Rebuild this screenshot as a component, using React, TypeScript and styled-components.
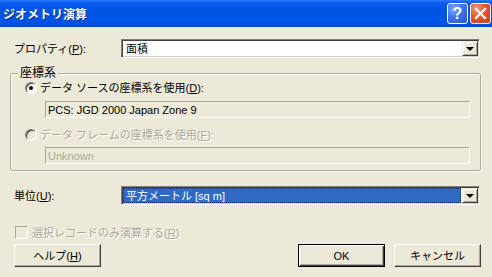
import React from 'react';
import styled, { createGlobalStyle } from 'styled-components';

const GlobalStyle = createGlobalStyle`
  html, body {
    margin: 0;
    padding: 0;
    background: #ece9d8;
  }
  body {
    font-family: "Liberation Sans", "Noto Sans CJK JP", sans-serif;
    font-size: 11px;
    color: #000;
  }
  * {
    box-sizing: border-box;
  }
`;

const Window = styled.div`
  width: 492px;
  height: 277px;
  background: #ece9d8;
  overflow: hidden;
  display: flex;
  flex-direction: column;
`;

const TitleBar = styled.div`
  flex: none;
  height: 27px;
  display: flex;
  align-items: center;
  gap: 2px;
  padding: 0 1px 0 3px;
  background: linear-gradient(
    to bottom,
    #2f7bff 0%,
    #0a5cf0 10%,
    #0054e3 35%,
    #0055e8 80%,
    #0046d6 100%
  );
`;

const Title = styled.div`
  flex: 1;
  color: #fff;
  font-family: "Noto Sans CJK JP", sans-serif;
  font-size: 12px;
  font-weight: bold;
  line-height: 27px;
  text-shadow: 1px 1px 0 #0a2a8a;
`;

const CaptionButton = styled.div<{ $variant: 'help' | 'close' }>`
  width: 21px;
  height: 21px;
  border: 1px solid #fff;
  border-radius: 3px;
  display: flex;
  align-items: center;
  justify-content: center;
  color: #fff;
  font-family: "Liberation Sans", sans-serif;
  font-weight: bold;
  font-size: 16px;
  background: ${(p) =>
    p.$variant === 'close'
      ? 'radial-gradient(circle at 30% 25%, #f39a7c 0%, #e2552e 45%, #c8401c 100%)'
      : 'radial-gradient(circle at 30% 25%, #7fa6ff 0%, #3d73ea 45%, #2a57d2 100%)'};
`;

const Body = styled.div`
  flex: 1;
  display: flex;
  flex-direction: column;
  padding: 12px 11px 0 10px;
`;

const FieldRow = styled.div<{ $top: number }>`
  display: grid;
  grid-template-columns: 107px 1fr;
  align-items: center;
  margin: ${(p) => p.$top}px 1px 0 4px;
`;

const Label = styled.span`
  line-height: 14px;
  white-space: nowrap;
`;

const Combo = styled.div`
  height: 19px;
  display: flex;
  padding: 1px;
  background: #fff;
  border: 1px solid;
  border-color: #808080 #fff #fff #808080;
  box-shadow: inset 1px 1px 0 #404040, inset -1px -1px 0 #d4d0c8;
`;

const ComboValue = styled.div<{ $selected?: boolean }>`
  flex: 1;
  display: flex;
  align-items: center;
  padding: 0 2px;
  margin-right: 1px;
  line-height: 14px;
  color: ${(p) => (p.$selected ? '#fff' : '#000')};
  background: ${(p) => (p.$selected ? '#316ac5' : 'transparent')};
  border: 1px ${(p) => (p.$selected ? 'dotted #1d2f66' : 'solid transparent')};
`;

const DropButton = styled.div`
  width: 16px;
  display: flex;
  align-items: center;
  justify-content: center;
  background: #ece9d8;
  border: 1px solid;
  border-color: #ece9d8 #404040 #404040 #ece9d8;
  box-shadow: inset 1px 1px 0 #fff, inset -1px -1px 0 #aca899;
`;

const Arrow = styled.span`
  width: 0;
  height: 0;
  border-left: 4px solid transparent;
  border-right: 4px solid transparent;
  border-top: 4px solid #000;
`;

const Group = styled.fieldset`
  margin: 8px 0 0 0;
  padding: 1px 0 6px 0;
  min-width: 0;
  border: 1px solid #aca899;
  border-radius: 2px;
  box-shadow: inset 1px 1px 0 #fff, 1px 1px 0 #fff;
  display: flex;
  flex-direction: column;
`;

const Legend = styled.legend`
  margin-left: 7px;
  padding: 0 2px;
  font-size: 12px;
  line-height: 14px;
  background: #ece9d8;
`;

const OptionRow = styled.div<{ $top: number; $disabled?: boolean }>`
  display: flex;
  align-items: center;
  gap: 3px;
  height: 14px;
  margin: ${(p) => p.$top}px 0 0 14px;
  color: ${(p) => (p.$disabled ? '#aca899' : '#000')};
  text-shadow: ${(p) => (p.$disabled ? '1px 1px 0 #fff' : 'none')};
  line-height: 14px;
  white-space: nowrap;
`;

const Radio = styled.span<{ $checked?: boolean; $disabled?: boolean }>`
  flex: none;
  position: relative;
  width: 12px;
  height: 12px;
  border-radius: 50%;
  border: 1px solid;
  border-color: #808080 #fff #fff #808080;
  background: ${(p) => (p.$disabled ? '#ece9d8' : '#fff')};
  box-shadow: inset 1px 1px 0 #404040;
  &::after {
    content: '';
    display: ${(p) => (p.$checked ? 'block' : 'none')};
    position: absolute;
    left: 3px;
    top: 3px;
    width: 4px;
    height: 4px;
    border-radius: 50%;
    background: #000;
  }
`;

const ReadField = styled.div<{ $top: number; $muted?: boolean }>`
  height: 17px;
  margin: ${(p) => p.$top}px 10px 0 34px;
  padding: 0 2px;
  display: flex;
  align-items: center;
  line-height: 14px;
  border: 1px solid;
  border-color: #aca899 #fff #fff #aca899;
  color: ${(p) => (p.$muted ? '#aca899' : '#000')};
`;

const CheckRow = styled.div`
  display: flex;
  align-items: center;
  gap: 4px;
  height: 13px;
  margin: 21px 0 0 5px;
  color: #aca899;
  text-shadow: 1px 1px 0 #fff;
  line-height: 14px;
  white-space: nowrap;
`;

const CheckBox = styled.span`
  flex: none;
  width: 13px;
  height: 13px;
  border: 1px solid;
  border-color: #aca899 #fff #fff #aca899;
  background: #ece9d8;
`;

const ButtonRow = styled.div`
  display: flex;
  justify-content: space-between;
  margin: 5px 0 0 4px;
`;

const ButtonGroup = styled.div`
  display: flex;
  gap: 9px;
`;

const Button = styled.div<{ $default?: boolean }>`
  width: 87px;
  height: 23px;
  display: flex;
  align-items: center;
  justify-content: center;
  background: #ece9d8;
  line-height: 14px;
  border: 1px solid;
  border-color: ${(p) => (p.$default ? '#000' : '#fff #404040 #404040 #fff')};
  box-shadow: ${(p) =>
    p.$default
      ? 'inset 1px 1px 0 #fff, inset -1px -1px 0 #404040, inset -2px -2px 0 #aca899'
      : 'inset -1px -1px 0 #aca899'};
`;

const Key = styled.u`
  text-decoration: underline;
`;

export default function App() {
  return (
    <Window>
      <GlobalStyle />
      <TitleBar>
        <Title>ジオメトリ演算</Title>
        <CaptionButton $variant="help">?</CaptionButton>
        <CaptionButton $variant="close">
          <svg width="13" height="13" viewBox="0 0 13 13">
            <path d="M2 2 L11 11 M11 2 L2 11" stroke="#fff" strokeWidth="2.2" strokeLinecap="square" />
          </svg>
        </CaptionButton>
      </TitleBar>
      <Body>
        <FieldRow $top={0}>
          <Label>
            プロパティ(<Key>P</Key>):
          </Label>
          <Combo>
            <ComboValue>面積</ComboValue>
            <DropButton>
              <Arrow />
            </DropButton>
          </Combo>
        </FieldRow>

        <Group>
          <Legend>座標系</Legend>
          <OptionRow $top={0}>
            <Radio $checked />
            <span>
              データ ソースの座標系を使用(<Key>D</Key>):
            </span>
          </OptionRow>
          <ReadField $top={6}>PCS: JGD 2000 Japan Zone 9</ReadField>
          <OptionRow $top={10} $disabled>
            <Radio $disabled />
            <span>
              データ フレームの座標系を使用(<Key>F</Key>):
            </span>
          </OptionRow>
          <ReadField $top={5} $muted>
            Unknown
          </ReadField>
        </Group>

        <FieldRow $top={15}>
          <Label>
            単位(<Key>U</Key>):
          </Label>
          <Combo>
            <ComboValue $selected>平方メートル [sq m]</ComboValue>
            <DropButton>
              <Arrow />
            </DropButton>
          </Combo>
        </FieldRow>

        <CheckRow>
          <CheckBox />
          <span>
            選択レコードのみ演算する(<Key>R</Key>)
          </span>
        </CheckRow>

        <ButtonRow>
          <Button>
            ヘルプ(<Key>H</Key>)
          </Button>
          <ButtonGroup>
            <Button $default>OK</Button>
            <Button>キャンセル</Button>
          </ButtonGroup>
        </ButtonRow>
      </Body>
    </Window>
  );
}
